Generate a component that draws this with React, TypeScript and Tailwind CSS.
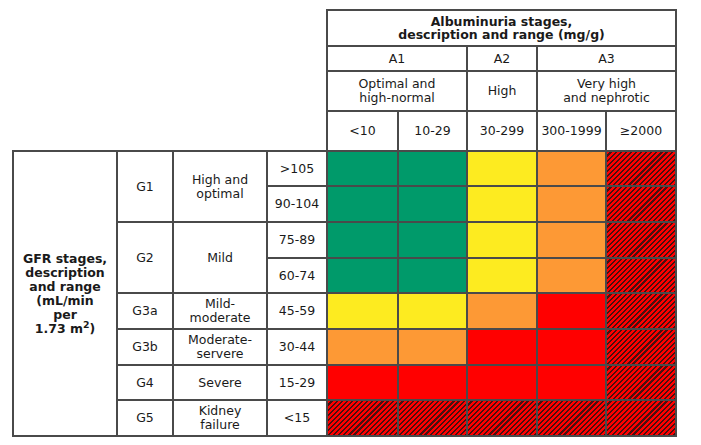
const G = "bg-[#009a6a]";
const Y = "bg-[#fdeb20]";
const O = "bg-[#fd9935]";
const R = "bg-[#ff0000]";
const H = "bg-[#ff0000] bg-[repeating-linear-gradient(135deg,#ff0000_0_2.1px,#4a0f0f_2.1px_3.6px)]";

const rows = [
  { range: ">105", colors: [G, G, Y, O, H], h: "h-[35px]" },
  { range: "90-104", colors: [G, G, Y, O, H], h: "h-[36px]" },
  { range: "75-89", colors: [G, G, Y, O, H], h: "h-[36px]" },
  { range: "60-74", colors: [G, G, Y, O, H], h: "h-[35px]" },
  { range: "45-59", colors: [Y, Y, O, R, H], h: "h-[36px]" },
  { range: "30-44", colors: [O, O, R, R, H], h: "h-[36px]" },
  { range: "15-29", colors: [R, R, R, R, H], h: "h-[35px]" },
  { range: "<15", colors: [H, H, H, H, H], h: "h-[36px]" },
];

const cell = "border-2 border-[#4a4a4a] text-center align-middle p-0";

export default function App() {
  return (
    <div className="w-[701px] h-[445px] bg-white pt-[9px] pl-[12px] overflow-hidden">
      <table
        className="table-fixed border-collapse text-[12.5px] leading-[14px] text-[#1a1a1a]"
        style={{ fontFamily: '"DejaVu Sans", Verdana, sans-serif' }}
      >
        <colgroup>
          <col className="w-[104px]" />
          <col className="w-[56px]" />
          <col className="w-[94px]" />
          <col className="w-[60px]" />
          <col className="w-[71px]" />
          <col className="w-[69px]" />
          <col className="w-[70px]" />
          <col className="w-[69px]" />
          <col className="w-[70px]" />
        </colgroup>
        <tbody>
          <tr className="h-[36px]">
            <td colSpan={4} rowSpan={4} className="p-0" />
            <td colSpan={5} className={`${cell} font-bold leading-[13.5px]`}>
              Albuminuria stages,
              <br />
              description and range (mg/g)
            </td>
          </tr>
          <tr className="h-[25px]">
            <td colSpan={2} className={cell}>A1</td>
            <td className={cell}>A2</td>
            <td colSpan={2} className={cell}>A3</td>
          </tr>
          <tr className="h-[40px]">
            <td colSpan={2} className={cell}>
              Optimal and
              <br />
              high-normal
            </td>
            <td className={cell}>High</td>
            <td colSpan={2} className={cell}>
              Very high
              <br />
              and nephrotic
            </td>
          </tr>
          <tr className="h-[40px]">
            <td className={cell}>&lt;10</td>
            <td className={cell}>10-29</td>
            <td className={cell}>30-299</td>
            <td className={cell}>300-1999</td>
            <td className={cell}>≥2000</td>
          </tr>
          {rows.map((r, i) => (
            <tr key={r.range} className={r.h}>
              {i === 0 && (
                <td rowSpan={8} className={`${cell} font-bold`}>
                  GFR stages,
                  <br />
                  description
                  <br />
                  and range
                  <br />
                  (mL/min
                  <br />
                  per
                  <br />
                  1.73 m<sup>2</sup>)
                </td>
              )}
              {i === 0 && (
                <>
                  <td rowSpan={2} className={cell}>G1</td>
                  <td rowSpan={2} className={cell}>
                    High and
                    <br />
                    optimal
                  </td>
                </>
              )}
              {i === 2 && (
                <>
                  <td rowSpan={2} className={cell}>G2</td>
                  <td rowSpan={2} className={cell}>Mild</td>
                </>
              )}
              {i === 4 && (
                <>
                  <td className={cell}>G3a</td>
                  <td className={cell}>
                    Mild-
                    <br />
                    moderate
                  </td>
                </>
              )}
              {i === 5 && (
                <>
                  <td className={cell}>G3b</td>
                  <td className={cell}>
                    Moderate-
                    <br />
                    servere
                  </td>
                </>
              )}
              {i === 6 && (
                <>
                  <td className={cell}>G4</td>
                  <td className={cell}>Severe</td>
                </>
              )}
              {i === 7 && (
                <>
                  <td className={cell}>G5</td>
                  <td className={cell}>
                    Kidney
                    <br />
                    failure
                  </td>
                </>
              )}
              <td className={cell}>{r.range}</td>
              {r.colors.map((c, j) => (
                <td key={j} className={`${cell} border-[#2a2a2a] ${c}`} />
              ))}
            </tr>
          ))}
        </tbody>
      </table>
    </div>
  );
}
